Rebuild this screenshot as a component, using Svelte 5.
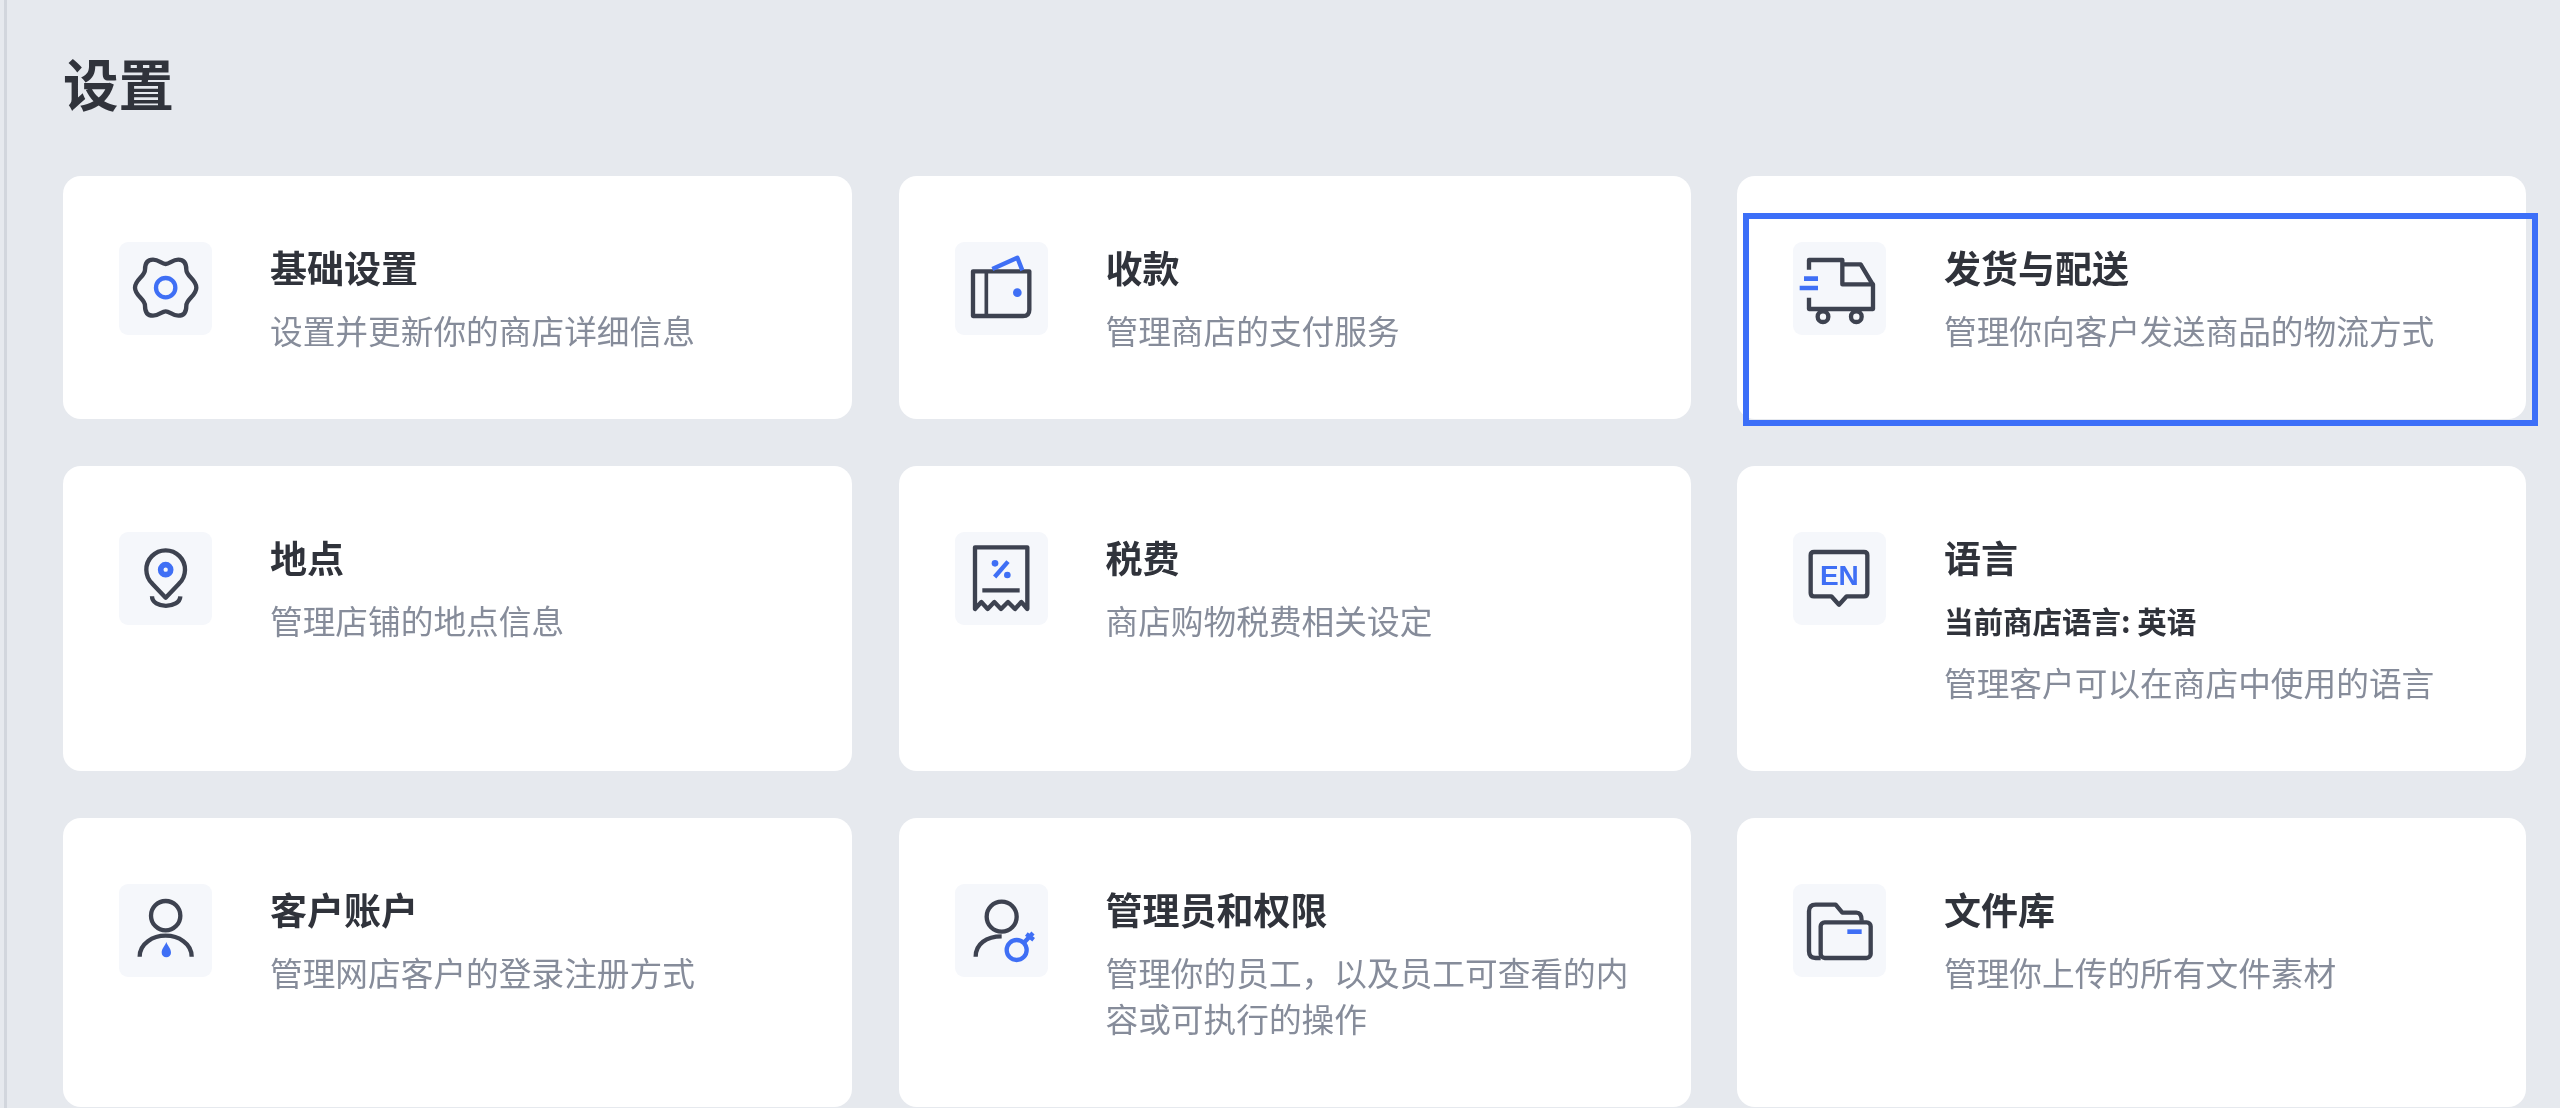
<script>
  const cards = [
    { icon: 'gear', vb: '58 65 279 279', title: '基础设置', desc: '设置并更新你的商店详细信息' },
    { icon: 'wallet', vb: '48 65 279 279', title: '收款', desc: '管理商店的支付服务' },
    { icon: 'truck', vb: '42 65 279 279', title: '发货与配送', desc: '管理你向客户发送商品的物流方式', selected: true },
    { icon: 'pin', vb: '58 65 279 279', title: '地点', desc: '管理店铺的地点信息' },
    { icon: 'tax', vb: '48 65 279 279', title: '税费', desc: '商店购物税费相关设定' },
    { icon: 'lang', vb: '42 65 279 279', title: '语言', note: '当前商店语言: 英语', desc: '管理客户可以在商店中使用的语言' },
    { icon: 'user', vb: '58 40 279 279', title: '客户账户', desc: '管理网店客户的登录注册方式' },
    { icon: 'admin', vb: '48 40 279 279', title: '管理员和权限', desc: '管理你的员工，以及员工可查看的内容或可执行的操作' },
    { icon: 'folder', vb: '42 40 279 279', title: '文件库', desc: '管理你上传的所有文件素材' }
  ];
</script>

<main class="page">
  <h1>设置</h1>
  <section class="grid">
    {#each cards as c}
      <article class="card">
        {#if c.selected}<div class="selection"></div>{/if}
        <div class="icon">
          <svg viewBox={c.vb} class="glyph">
            {#if c.icon === 'gear'}
              <path class="dark" d="M198 131C186 131 178 118 160 118C143 118 136 130 136 148C136 168 106 178 106 202C106 226 136 236 136 256C136 274 143 286 160 286C178 286 186 273 198 273C210 273 218 286 236 286C253 286 260 274 260 256C260 236 290 226 290 202C290 178 260 168 260 148C260 130 253 118 236 118C218 118 210 131 198 131Z" />
              <circle class="blue" cx="198" cy="202" r="29" />
            {:else if c.icon === 'wallet'}
              <path class="dark" d="M102 153H271V268Q271 287 252 287H102Z" />
              <path class="dark mid" d="M142 153V287" />
              <path class="blue" d="M160 146L235 112L250 150" />
              <circle class="dot" cx="235" cy="217" r="13" />
            {:else if c.icon === 'truck'}
              <path class="dark" d="M90 148V119H190V192H282V266H90V232" />
              <path class="dark" d="M190 132H245L281 192" />
              <circle class="dark" cx="132" cy="289" r="16" />
              <circle class="dark" cx="232" cy="289" r="16" />
              <path class="blue thick" d="M75 175H117M62 203H117" />
            {:else if c.icon === 'pin'}
              <path class="dark" d="M198 262L158 220A58 58 0 1 1 238 220Z" />
              <circle class="blue ring" cx="198" cy="178" r="15" />
              <path class="dark" d="M157 258C157 296 240 296 242 258" />
            {:else if c.icon === 'tax'}
              <path class="dark" d="M108 296V111H265V296L247 275L228 296L207 275L186 296L166 275L146 296L127 275Z" />
              <path class="dark" d="M130 240H242" />
              <path class="blue" d="M207 154L167 200" />
              <circle class="dot" cx="168" cy="159" r="10" />
              <circle class="dot" cx="205" cy="194" r="10" />
            {:else if c.icon === 'lang'}
              <path class="dark" d="M105 125H255Q265 125 265 135V248Q265 258 255 258H203L180 283L157 258H105Q95 258 95 248V135Q95 125 105 125Z" />
              <text class="en" x="181" y="224" text-anchor="middle">EN</text>
            {:else if c.icon === 'user'}
              <circle class="dark" cx="198" cy="135" r="44" />
              <path class="dark" d="M120 258C120 218 160 195 198 195C236 195 276 218 276 258" />
              <path class="dot" d="M200 214C204 226 214 234 214 246A14 14 0 0 1 186 246C186 234 196 226 200 214Z" />
            {:else if c.icon === 'admin'}
              <circle class="dark" cx="188" cy="138" r="45" />
              <path class="dark" d="M110 258C110 220 142 197 188 197" />
              <circle class="blue" cx="233" cy="238" r="30" />
              <path class="blue" d="M254 217L282 187M262 190L284 207" />
            {:else}
              <path class="dark" d="M125 262H110Q90 262 90 242V122Q90 102 110 102H170L190 126H232Q248 126 248 150" />
              <rect class="dark" x="125" y="155" width="150" height="107" rx="12" />
              <path class="blue thick" d="M205 183H248" />
            {/if}
          </svg>
        </div>
        <div class="body">
          <h2>{c.title}</h2>
          {#if c.note}<p class="note">{c.note}</p>{/if}
          <p class="desc">{c.desc}</p>
        </div>
      </article>
    {/each}
  </section>
</main>

<style>
  :global(body) {
    margin: 0;
    background: #e6e9ee;
    overflow: hidden;
  }
  .page {
    box-sizing: border-box;
    height: 1108px;
    overflow: hidden;
    margin-left: 4px;
    border-left: 3px solid #d2d6dd;
    padding: 47px 34px 0 56px;
    font-family: "Noto Sans CJK SC", "Noto Sans", sans-serif;
    filter: blur(0.5px);
  }
  h1 {
    margin: 0 0 59px;
    font-size: 55.5px;
    line-height: 70px;
    font-weight: 700;
    color: #30333b;
  }
  .grid {
    display: grid;
    grid-template-columns: 1fr 792px 1fr;
    gap: 47px 46.5px;
  }
  .card {
    position: relative;
    display: flex;
    gap: 58px;
    padding: 66px 56px;
    background: #fff;
    border-radius: 18px;
  }
  .selection {
    position: absolute;
    inset: 37px -12px -7px 6px;
    border: 6.5px solid #3c6ff8;
    pointer-events: none;
  }
  .icon {
    flex: none;
    width: 93px;
    height: 93px;
    border-radius: 9px;
    background: #f5f7fb;
  }
  .glyph {
    display: block;
    width: 93px;
    height: 93px;
    fill: none;
  }
  .dark, .blue {
    fill: none;
    stroke-width: 13;
    stroke-linejoin: round;
    stroke-linecap: butt;
  }
  .dark { stroke: #3d4250; }
  .mid { stroke-width: 11; }
  .blue { stroke: #3f6ff5; stroke-width: 13; }
  .thick { stroke-width: 14; }
  .ring { stroke-width: 17; }
  .dot { fill: #3f6ff5; }
  .en {
    fill: #3f6ff5;
    font-family: "Liberation Sans", sans-serif;
    font-weight: 700;
    font-size: 84px;
  }
  .body { min-width: 0; }
  h2 {
    margin: 0 0 15px;
    font-size: 37px;
    line-height: 50px;
    font-weight: 700;
    color: #30333b;
  }
  p { margin: 0; line-height: 46px; }
  .note {
    margin-bottom: 16px;
    font-size: 29.5px;
    font-weight: 700;
    color: #30333b;
  }
  .desc {
    font-size: 32.7px;
    color: #868c9a;
  }
</style>
